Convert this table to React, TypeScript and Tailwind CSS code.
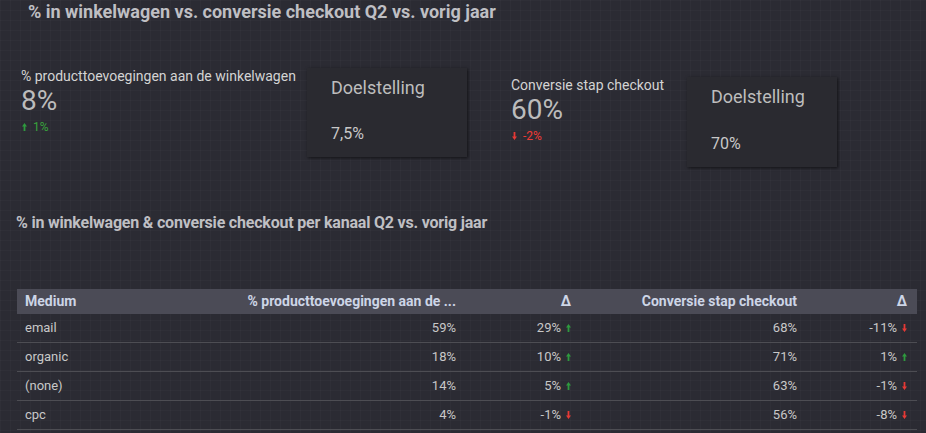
import React from 'react';

const Up = () => (
  <svg width="5" height="8" viewBox="0 0 5 8" className="inline-block">
    <path d="M2.5 0 L5 3.5 L3.4 3.5 L3.4 8 L1.6 8 L1.6 3.5 L0 3.5 Z" fill="#2e9a3e" />
  </svg>
);

const Down = () => (
  <svg width="5" height="8" viewBox="0 0 5 8" className="inline-block">
    <path d="M2.5 8 L5 4.5 L3.4 4.5 L3.4 0 L1.6 0 L1.6 4.5 L0 4.5 Z" fill="#e53935" />
  </svg>
);

const rows = [
  { medium: 'email', pct: '59%', d1: '29%', up1: true, conv: '68%', d2: '-11%', up2: false },
  { medium: 'organic', pct: '18%', d1: '10%', up1: true, conv: '71%', d2: '1%', up2: true },
  { medium: '(none)', pct: '14%', d1: '5%', up1: true, conv: '63%', d2: '-1%', up2: false },
  { medium: 'cpc', pct: '4%', d1: '-1%', up1: false, conv: '56%', d2: '-8%', up2: false },
];

const Delta = ({ value, up }: { value: string; up: boolean }) => (
  <span className="flex items-center justify-end gap-[5px]">
    {value}
    {up ? <Up /> : <Down />}
  </span>
);

export default function App() {
  return (
    <div
      className="w-[926px] h-[433px] overflow-hidden bg-[#2b2b33] bg-[linear-gradient(rgba(255,255,255,0.02)_1px,transparent_1px),linear-gradient(90deg,rgba(255,255,255,0.02)_1px,transparent_1px)] bg-[size:10px_10px] text-[#c4c4c4]"
      style={{ fontFamily: 'Roboto, "Noto Sans", sans-serif' }}
    >
      <h1 className="pl-[28px] pt-[1px] text-[18px] font-bold text-[#bfbfc3] leading-[22px]">
        % in winkelwagen vs. conversie checkout Q2 vs. vorig jaar
      </h1>

      <div className="flex mt-[45px] h-[100px]">
        <div className="pl-[21px] w-[307px]">
          <div className="text-[14px] text-[#d4d4d4] leading-[16px]">% producttoevoegingen aan de winkelwagen</div>
          <div className="text-[28px] text-[#bcbcbc] leading-[30px] mt-[2px]">8%</div>
          <div className="flex items-center gap-[6px] text-[12px] text-[#38a43c] mt-[2px] pl-[1px]">
            <Up />1%
          </div>
        </div>
        <div className="w-[160px] h-[89px] bg-[#2a2a30] shadow-[1px_1px_3px_rgba(0,0,0,0.6)] pl-[24px] pt-[6px]">
          <div className="text-[18px] text-[#bdbdbd]">Doelstelling</div>
          <div className="text-[16px] text-[#c8c8c8] mt-[21px]">7,5%</div>
        </div>

        <div className="pl-[44px] w-[220px] pt-[9px]">
          <div className="text-[14px] text-[#d4d4d4] leading-[16px]">Conversie stap checkout</div>
          <div className="text-[28px] text-[#bcbcbc] leading-[30px] mt-[2px]">60%</div>
          <div className="flex items-center gap-[6px] text-[12px] text-[#ef3b36] mt-[2px] pl-[1px]">
            <Down />-2%
          </div>
        </div>
        <div className="mt-[9px] w-[150px] h-[90px] bg-[#2a2a30] shadow-[1px_1px_3px_rgba(0,0,0,0.6)] pl-[24px] pt-[6px]">
          <div className="text-[18px] text-[#bdbdbd]">Doelstelling</div>
          <div className="text-[16px] text-[#c8c8c8] mt-[22px]">70%</div>
        </div>
      </div>

      <h2 className="pl-[16px] mt-[44px] text-[16px] tracking-[-0.2px] font-bold text-[#bfbfc3] leading-[22px]">
        % in winkelwagen &amp; conversie checkout per kanaal Q2 vs. vorig jaar
      </h2>

      <div className="ml-[17px] mt-[55px] w-[900px] text-[13px]">
        <div className="grid grid-cols-[183px_266px_115px_226px_110px] h-[25px] items-center bg-[#4b4b56] font-bold text-[14px] text-[#cdd5e6]">
          <div className="pl-[8px]">Medium</div>
          <div className="text-right pr-[10px]">% producttoevoegingen aan de ...</div>
          <div className="text-right pr-[10px]">Δ</div>
          <div className="text-right pr-[10px]">Conversie stap checkout</div>
          <div className="text-right pr-[10px]">Δ</div>
        </div>
        {rows.map((r) => (
          <div
            key={r.medium}
            className="grid grid-cols-[183px_266px_115px_226px_110px] h-[29px] items-center border-b border-[#4d4d53] text-[#c8c8c8]"
          >
            <div className="pl-[8px]">{r.medium}</div>
            <div className="text-right pr-[10px]">{r.pct}</div>
            <div className="pr-[10px]"><Delta value={r.d1} up={r.up1} /></div>
            <div className="text-right pr-[10px]">{r.conv}</div>
            <div className="pr-[10px]"><Delta value={r.d2} up={r.up2} /></div>
          </div>
        ))}
      </div>
    </div>
  );
}
